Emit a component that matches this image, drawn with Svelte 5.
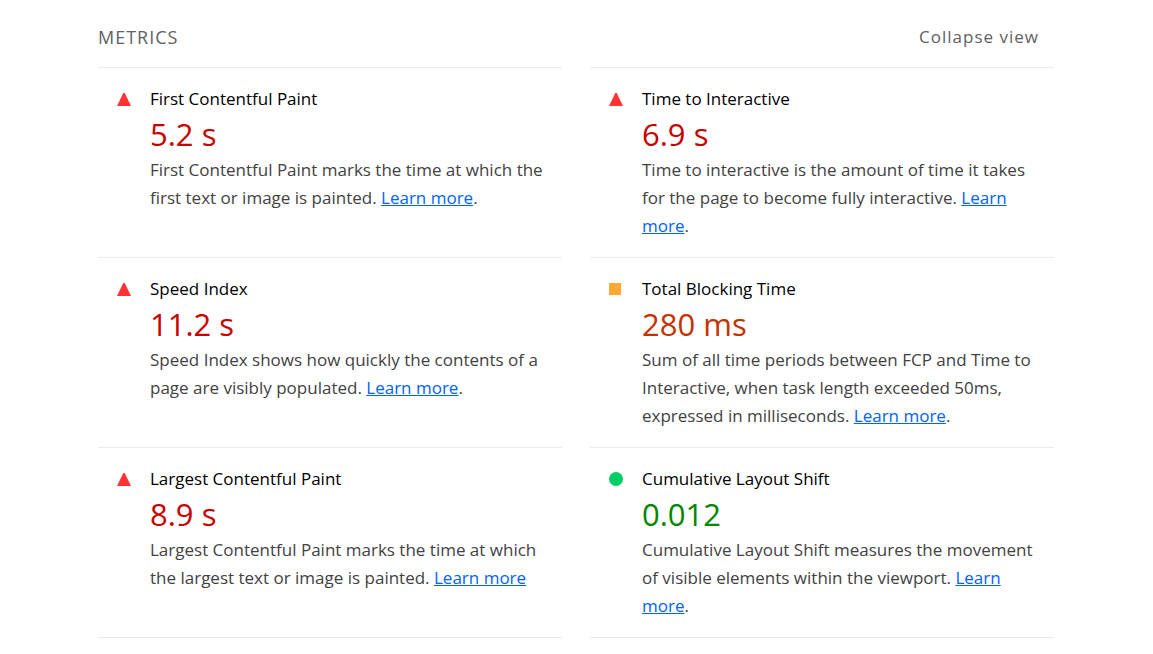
<script>
  const metrics = [
    { name: 'First Contentful Paint', value: '5.2 s', level: 'fail', text: 'First Contentful Paint marks the time at which the first text or image is painted.', end: '.' },
    { name: 'Time to Interactive', value: '6.9 s', level: 'fail', text: 'Time to interactive is the amount of time it takes for the page to become fully interactive.', end: '.' },
    { name: 'Speed Index', value: '11.2 s', level: 'fail', text: 'Speed Index shows how quickly the contents of a page are visibly populated.', end: '.' },
    { name: 'Total Blocking Time', value: '280 ms', level: 'average', text: 'Sum of all time periods between FCP and Time to Interactive, when task length exceeded 50ms, expressed in milliseconds.', end: '.' },
    { name: 'Largest Contentful Paint', value: '8.9 s', level: 'fail', text: 'Largest Contentful Paint marks the time at which the largest text or image is painted.', end: '' },
    { name: 'Cumulative Layout Shift', value: '0.012', level: 'pass', text: 'Cumulative Layout Shift measures the movement of visible elements within the viewport.', end: '.' }
  ];
</script>

<main>
  <header>
    <h2>METRICS</h2>
    <button type="button">Collapse view</button>
  </header>
  <div class="grid">
    {#each metrics as m}
      <section class={m.level}>
        <svg class="icon" width="14" height="14" viewBox="0 0 14 14" aria-hidden="true">
          {#if m.level === 'fail'}
            <path d="M6.3 1H7.7L14 14H0Z" fill="#ff3333" />
          {:else if m.level === 'average'}
            <rect x="0" y="1" width="12" height="12" fill="#ffa933" />
          {:else}
            <circle cx="7" cy="7" r="7" fill="#00cc66" />
          {/if}
        </svg>
        <div class="body">
          <h3>{m.name}</h3>
          <div class="value">{m.value}</div>
          <p>{m.text} <a href="#learn">Learn more</a>{m.end}</p>
        </div>
      </section>
    {/each}
  </div>
</main>

<style>
  :global(body) {
    background: #fff;
  }
  main {
    box-sizing: border-box;
    padding: 23px 99px 0 98px;
    font-family: "Open Sans", "Noto Sans", sans-serif;
    font-size: 17px;
    color: #212121;
  }
  header {
    display: flex;
    justify-content: space-between;
    align-items: center;
    height: 28px;
    padding-right: 15px;
    margin-bottom: 16px;
  }
  h2,
  button {
    margin: 0;
    padding: 0;
    border: 0;
    background: none;
    font: inherit;
    line-height: 28px;
    letter-spacing: 1px;
    color: #616161;
  }
  button {
    cursor: pointer;
  }
  h2 {
    font-size: 18px;
  }
  .grid {
    display: grid;
    grid-template-columns: 1fr 1fr;
    column-gap: 28px;
  }
  section {
    display: flex;
    gap: 19px;
    padding: 17px 12px 17px 19px;
    border-top: 1px solid #ebebeb;
  }
  section:nth-last-child(-n + 2) {
    border-bottom: 1px solid #ebebeb;
  }
  .icon {
    flex: none;
    margin-top: 7px;
  }
  h3 {
    margin: 0;
    font-size: 17px;
    font-weight: 400;
    line-height: 27px;
    color: #000;
  }
  .value {
    font-size: 31px;
    line-height: 44px;
  }
  .fail .value {
    color: #c70000;
  }
  .average .value {
    color: #c33300;
  }
  .pass .value {
    color: #008800;
  }
  p {
    margin: 0;
    line-height: 28px;
    color: #424242;
  }
  a {
    color: #0062ff;
  }
</style>
